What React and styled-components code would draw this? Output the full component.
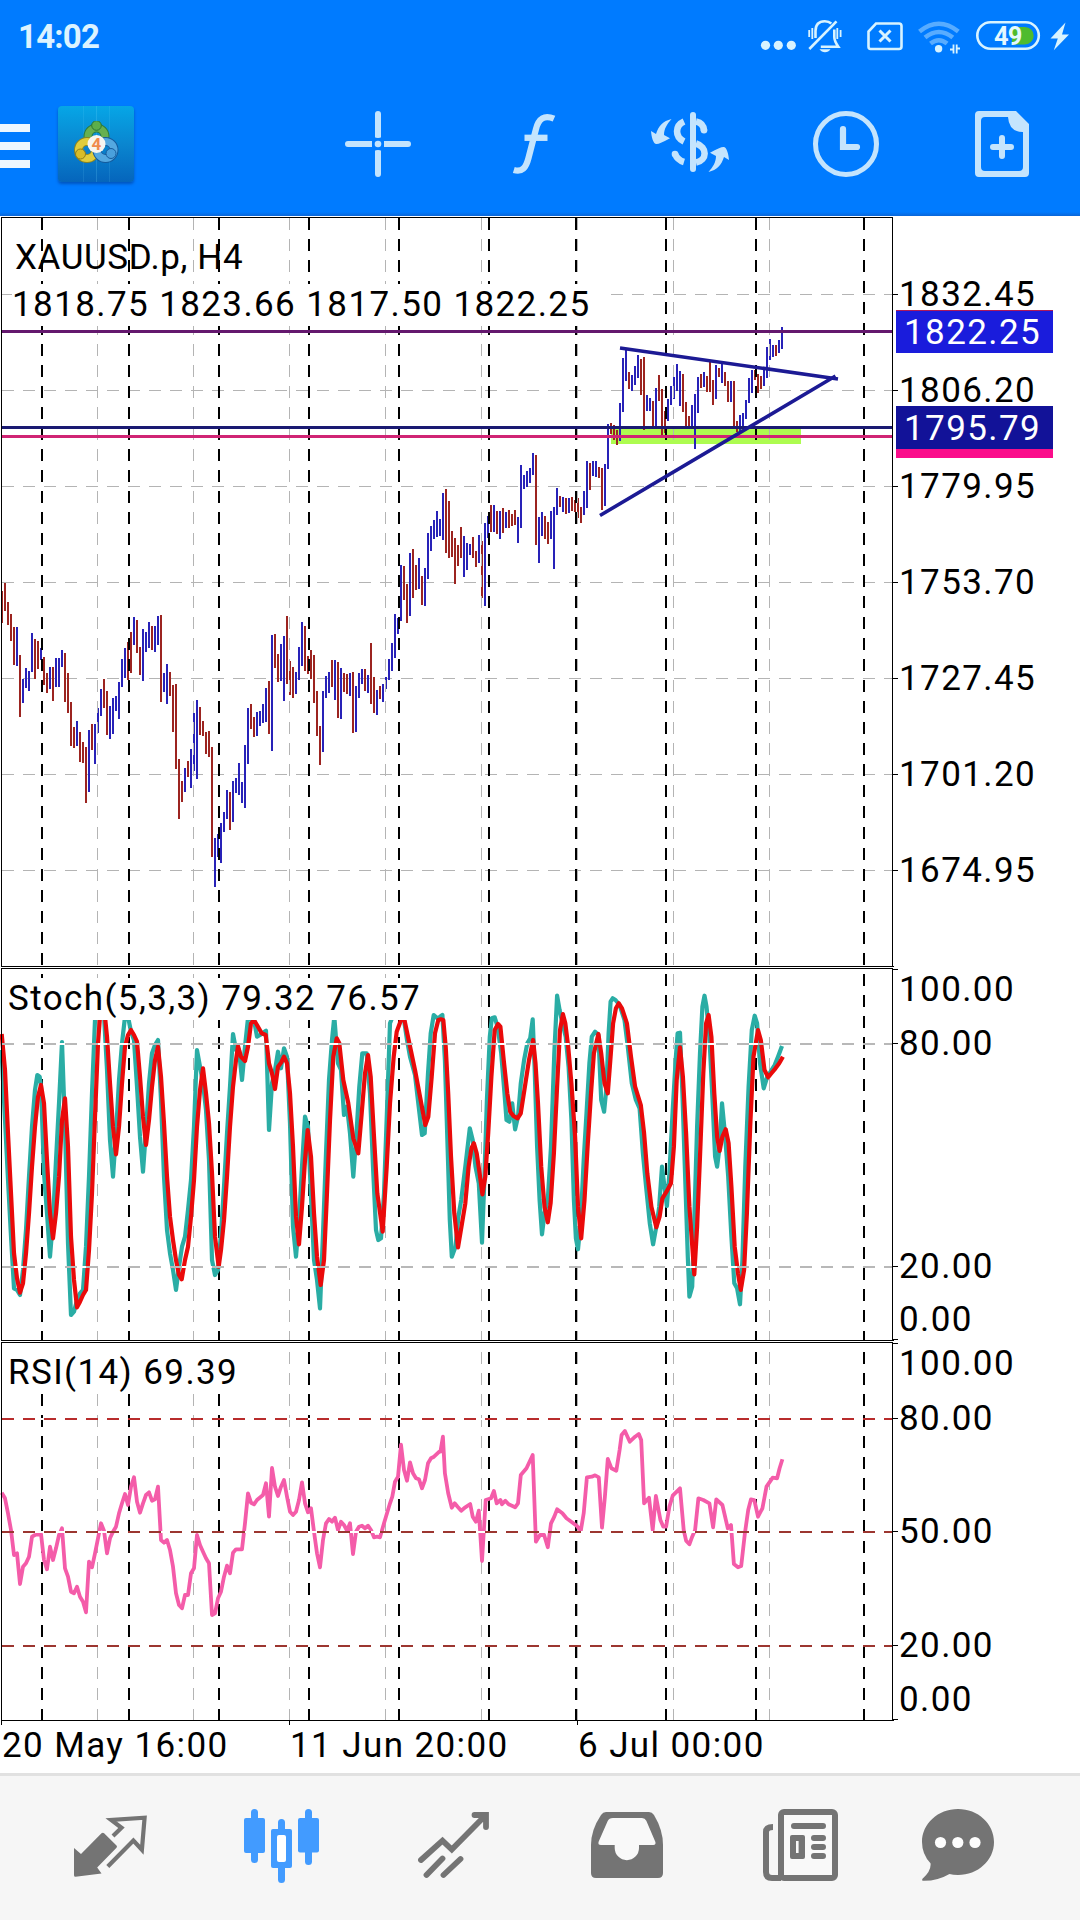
import React from 'react'
import styled, { createGlobalStyle } from 'styled-components'

const MONTH_LINES = [42, 129, 219, 309, 399, 489, 576, 666, 756, 864]
const GRID_LINES = [97, 193, 289, 385, 481, 577, 673, 769]
const PRICE_ROWS = [294, 390, 486, 582, 678, 774, 870]

// high-low bars, three units to a pixel, r = down and b = up
const barGroups = [
  {
    start: 0,
    top: 560,
    bars: `r93,188 r69,152 r126,194 r162,242 r201,314 b201,317 r285,470 b357,429 b324,383 b333,392
b219,335 r237,356 r243,326 b264,300 r291,374 r339,398 b321,386 r321,422 b294,380 b294,380
b270,320 r279,425 r339,458 r426,557 r501,563 b483,557 r516,605 r546,608 r561,728 b510,695
r492,569 b492,611 b444,518 b387,467 r357,443 r393,524 b438,536 b414,521 b408,452 b366,476
b297,380 b264,353 r246,359 r216,338 b171,254 r180,278 r261,344 b207,362 b216,275 b186,263
r198,269 b198,275 b168,254 r165,425 b339,395 b312,433 r336,407 r375,515 r372,626 r597,776
r663,725 b624,695 r603,650 b567,683 b459,632 b420,656 r441,524 r483,527 r516,581 r513,590
r561,890 b834,980 b822,890 b789,908 b756,815 b690,776 r696,809 b663,785 b654,698 b609,704
b666,728 b555,743 b444,611 r432,506 r471,530 b456,527 b453,497 b432,488 b384,485 r363,521
b225,572 r222,323 r282,365 b252,362 b228,422 r168,371 r303,404 r321,413 b336,401 b261,359
b186,317 r198,332 r288,341 r270,356 r285,428 r393,527 r498,614 b393,575 b348,413 b336,398
r300,380 b300,419 r306,473 b324,476 r339,395 r342,401 b339,407 r336,518 b378,515 b339,413
b327,371 r327,392 b345,398 r249,431 r351,458 b390,464 r378,416 b372,425 b351,386 b297,359
b249,332 b162,293 b174,221`,
  },
  {
    start: 133,
    top: 430,
    bars: `b405,572 r408,509 r462,578 b369,557 r357,503 r405,479 b384,476 r438,524 b414,527 b309,446
b288,362 b270,326 b243,320 b267,317 b189,329 r177,368 r213,383 r303,380 r324,461 r345,407
r291,383 b318,440 b339,419 b342,374 r321,383 r363,410 b315,398 r333,503 b279,527 b258,323
r225,305 b225,305 r243,311 b243,326 r234,308 b246,293 r240,293 r252,287 r240,284 b261,338
b105,293 b135,176 b123,170 b114,158 b69,134 r75,344 b261,398 b246,317 r258,326 r276,341
b243,326 b231,416 b174,254 r198,230 b201,245 r204,251 b204,248 r201,242 r210,245 r204,263
r231,278 b183,254 b93,233 r99,179 b93,137 b93,140 r111,143 r114,239 b102,227`,
  },
  {
    start: 202,
    top: 300,
    bars: `b372,506 r369,401 r375,419 r390,434 b309,422 b174,335 b147,242 r216,266 b225,272 b198,254
b165,233 r177,284 r171,389 b285,332 b294,332 r303,380 b264,377 r225,302 r267,404 r333,398
b297,364 b258,314 b231,296 b192,272 b213,317 r222,335 r306,377 r348,377 b315,380 b282,446
b231,338 r222,263 b216,260 r228,275 r186,275 r240,314 b195,296 r204,230 b192,248 r216,257
r243,305 b243,305 r243,377 r363,395 b345,401 b339,383 b300,356 b234,308 b210,278 r210,239
r222,278 r228,266 b210,257 b141,233 b117,179 b135,170 r135,167 b120,158 b81,146`,
  },
]

const bars = barGroups.flatMap((group) =>
  group.bars.split(/\s+/).map((bar, index) => {
    const [high, low] = bar.slice(1).split(',').map(Number)
    return {
      x: 1 + 3 * (group.start + index),
      y: Math.round(group.top + high / 3),
      height: Math.round((low - high) / 3),
      fill: bar[0] === 'r' ? '#9c2420' : '#2822b8',
    }
  })
)

// each line is kept in two halves with their own horizontal scale
const trace = (top, left, right) => {
  const convert = (text, start, scale) =>
    text.trim().split(/\s+/).map((pair) => {
      const [x, y] = pair.split(',').map(Number)
      return `${(start + x / scale).toFixed(1)},${(top + y / 3).toFixed(1)}`
    })
  return [...convert(left, 0, 3), ...convert(right, 440, 2.45)].join(' ')
}

const stochMain = trace(
  960,
  `4,270 6,300 15,480 24,660 33,830 42,985 51,990 60,1005 69,930 78,810 87,650 96,500 105,390 112,345 119,350 123,380
132,640 141,760 150,890 159,780 168,600 177,430 186,246 195,500 204,850 213,1065 222,1055 231,1020 240,1000 249,990
258,860 267,650 276,400 285,180 294,165 312,165 321,330 330,540 339,650 348,520 357,360 366,250 375,170 384,170
393,215 402,240 411,380 420,530 429,635 438,510 447,370 456,280 465,255 474,240 483,420 492,650 501,810 510,880
519,930 528,990 537,920 546,860 555,830 564,750 573,660 582,500 591,270 600,320 609,370 618,450 627,600 636,900
645,945 654,930 663,820 672,680 681,520 690,380 699,222 708,270 717,270 726,360 735,260 744,175 762,180 771,230
780,225 798,212 807,510 816,370 825,330 834,275 843,325 852,265 861,290 870,490 879,800 888,890 897,780 906,620
915,470 924,500 933,710 942,900 951,960 960,1045 969,820 978,580 987,360 996,240 1003,170 1014,310 1023,330
1032,465 1041,440 1050,520 1060,650 1070,510 1078,380 1087,280 1100,280 1110,400 1119,620 1128,810 1135,840
1143,835 1152,700 1161,450 1170,190 1180,165 1203,170 1212,180 1221,240 1230,290 1245,345 1256,440 1266,525
1274,520 1284,340 1292,220 1301,165 1312,175`,
  `0,170 6,165 12,300 20,620 24,780 29,890 38,860 45,770 52,720 62,620 73,505 80,540 87,620 95,670 103,848 108,680
115,420 122,230 127,175 134,172 141,200 150,280 158,400 163,480 170,485 177,430 184,508 191,470 198,370 206,300
214,250 221,235 227,178 232,330 238,560 244,720 250,823 256,760 264,720 272,560 280,280 287,107 293,150 300,190
308,230 315,320 322,480 328,720 333,835 338,868 345,780 352,600 359,460 366,310 372,230 380,215 388,225 395,420
402,455 408,380 413,220 418,125 423,115 430,120 440,135 452,180 460,260 470,370 480,420 489,445 497,580 505,680
514,790 522,853 530,800 537,740 544,620 550,680 556,738 562,640 570,450 578,290 582,220 588,218 594,400 602,700
607,890 611,1010 618,980 624,740 630,500 637,280 643,140 648,107 653,140 660,230 667,400 674,590 679,620 685,560
691,430 698,520 706,650 714,830 721,970 728,985 735,1033 741,900 748,620 756,380 764,210 771,167 777,190 784,310
793,385 802,350 810,335 820,315 828,290 838,258`
)

const stochSignal = trace(
  960,
  `5,222 15,330 24,520 33,700 42,880 51,955 60,998 69,970 78,880 87,760 96,620 105,500 114,410 123,375 132,430
141,600 150,760 159,835 168,760 177,650 186,480 195,415 204,560 213,830 222,960 231,1042 240,1025 249,1005 258,990
267,870 276,700 285,470 294,250 300,170 315,170 321,230 330,370 339,500 348,583 357,500 366,370 375,260 384,225
393,210 402,225 411,245 420,350 429,470 438,555 447,480 456,380 465,300 474,260 483,350 492,490 501,650 510,770
519,840 528,900 537,945 545,958 555,900 564,860 573,770 582,660 591,500 600,390 609,325 618,400 627,490 636,640
645,830 656,920 663,870 672,780 681,650 690,500 699,380 708,300 714,258 723,290 735,303 744,260 753,190 762,180
771,195 785,220 797,225 807,310 816,340 825,387 834,320 843,308 852,290 861,310 870,400 879,560 888,770 897,853
906,740 915,600 923,510 933,590 942,760 951,890 962,975 972,900 980,720 990,480 1000,290 1010,235 1018,250
1030,360 1045,430 1060,535 1075,580 1085,460 1095,340 1104,285 1112,350 1122,530 1132,700 1148,815 1160,620
1170,430 1181,290 1190,215 1203,180 1213,178 1225,235 1245,330 1260,410 1276,495 1285,470 1295,350 1305,220 1315,180`,
  `2,178 8,180 14,260 20,400 27,590 35,760 44,862 54,790 62,730 70,620 77,565 83,550 90,580 97,640 104,703 111,650
118,520 126,350 134,210 142,192 148,200 156,300 165,400 172,455 180,468 190,475 198,460 208,380 218,300 228,240
234,310 240,430 248,620 256,740 264,787 271,730 279,580 287,380 294,210 301,162 307,190 314,260 322,370 331,530
338,740 346,835 354,720 362,550 370,400 377,280 388,222 395,280 403,370 411,400 418,290 424,190 431,145 438,130
446,145 458,190 468,290 478,380 492,435 500,520 508,640 518,740 530,802 538,770 545,715 555,695 566,670 573,560
580,360 588,262 595,350 603,520 611,740 623,943 630,800 637,590 645,340 652,190 658,165 665,230 672,400 679,530
685,573 692,530 700,508 707,550 714,680 722,860 730,940 737,990 745,930 752,760 760,500 768,290 779,210 786,240
795,330 804,352 812,340 822,325 831,310 840,290`
)

const rsiLine = trace(
  1340,
  `5,458 15,475 24,520 33,570 42,645 51,640 60,732 69,680 78,670 87,650 96,590 105,585 123,582 132,660 141,688
150,620 159,660 168,625 177,585 186,565 195,685 204,710 213,755 222,760 231,740 240,770 249,785 258,817 267,665
276,682 285,640 294,595 303,550 312,572 321,640 330,595 339,575 348,560 357,520 366,490 375,462 384,495 393,440
402,412 411,485 420,518 429,490 438,465 447,457 456,482 465,478 474,440 483,600 492,608 501,600 510,630 519,680
528,760 537,795 546,805 555,765 564,765 573,700 582,685 591,585 600,615 609,635 618,655 627,670 636,825 645,820
654,775 663,755 672,710 681,677 690,700 699,638 708,628 726,628 735,550 744,460 753,488 762,493 771,480 789,465
798,430 807,530 816,384 825,440 834,468 843,440 852,420 861,470 870,515 879,525 888,515 897,480 906,427 915,490
924,517 933,505 942,575 951,640 960,682 969,600 978,550 987,537 996,545 1005,533 1014,570 1023,545 1032,555
1041,572 1050,550 1059,642 1068,575 1077,560 1086,557 1095,565 1104,557 1113,570 1122,592 1131,590 1140,592
1152,550 1161,520 1170,490 1177,470 1185,425 1194,410 1203,314 1212,390 1221,422 1230,367 1239,400 1248,415
1257,418 1266,445 1275,420 1284,370 1293,355 1302,350 1318,335`,
  `1,335 7,290 12,400 20,460 29,503 36,490 43,500 52,512 62,502 74,492 80,530 88,545 95,512 103,663 108,560 112,480
125,475 132,453 139,490 148,480 152,493 160,482 168,493 184,502 191,490 198,405 212,385 227,345 235,605 245,585
255,585 264,622 272,550 280,530 287,508 300,520 310,535 335,557 345,572 352,520 360,412 372,410 380,406 389,412
397,563 404,470 411,357 420,385 432,392 440,330 445,285 453,273 465,305 478,290 487,282 493,300 500,490 512,473
521,570 529,468 540,540 547,560 554,560 562,500 570,467 588,445 597,570 603,602 611,613 618,590 625,570 633,475
645,480 660,490 669,562 677,478 692,495 705,565 713,555 720,672 730,682 738,678 747,580 755,510 762,478 770,480
779,530 790,505 800,440 815,413 826,415 832,385 839,358`
)

const priceLabels = [
  { text: '1832.45', y: 294 },
  { text: '1806.20', y: 390 },
  { text: '1779.95', y: 486 },
  { text: '1753.70', y: 582 },
  { text: '1727.45', y: 678 },
  { text: '1701.20', y: 774 },
  { text: '1674.95', y: 870 },
]
const stochLabels = [
  { text: '100.00', y: 989, tick: 969 },
  { text: '80.00', y: 1043, tick: 1043 },
  { text: '20.00', y: 1266, tick: 1266 },
  { text: '0.00', y: 1319, tick: 1339 },
]
const rsiLabels = [
  { text: '100.00', y: 1363, tick: 1343 },
  { text: '80.00', y: 1418, tick: 1418 },
  { text: '50.00', y: 1531, tick: 1531 },
  { text: '20.00', y: 1645, tick: 1645 },
  { text: '0.00', y: 1699, tick: 1719 },
]

function Verticals({ top, bottom }) {
  // every dash starts on the same 21px rhythm, counted from the first pane
  const offset = (top - 218) % 21
  return (
    <g shapeRendering="crispEdges" fill="none" strokeDasharray="12 9" strokeDashoffset={offset}>
      {GRID_LINES.map((x) => (
        <path key={x} d={`M${x + 0.5} ${top}V${bottom}`} stroke="#b4b4b4" />
      ))}
      {MONTH_LINES.map((x) => (
        <path key={x} d={`M${x} ${top}V${bottom}`} stroke="#000" strokeWidth="2" />
      ))}
    </g>
  )
}

function Level({ y, color, width = 2 }) {
  return (
    <g shapeRendering="crispEdges" strokeWidth={width}>
      <path d={`M2 ${y}H892`} stroke="#fff" />
      <path d={`M2 ${y}H892`} stroke={color} strokeDasharray="12 9" />
    </g>
  )
}

function Frame({ top, bottom, ticks }) {
  return (
    <g shapeRendering="crispEdges" fill="none" stroke="#000">
      <path d={`M1 ${top + 0.5}H892.5V${bottom + 0.5}M894 ${bottom + 0.5}H1.5V${top}`} />
      {ticks.map((y) => (
        <path key={y} d={`M893 ${y + 0.5}H898`} />
      ))}
    </g>
  )
}

function Axis({ labels, top, children }) {
  return (
    <Scale>
      {labels.map((label) => (
        <ScaleLabel key={label.text} style={{ top: label.y - top - 17 }}>
          {label.text}
        </ScaleLabel>
      ))}
      {children}
    </Scale>
  )
}

function StatusBar() {
  return (
    <Status>
      <Clock>14:02</Clock>
      <Icon viewBox="760 16 312 40" $w={312} $h={40}>
        <g fill="#d8f3ff">
          <circle cx="765.5" cy="45.3" r="4.6" />
          <circle cx="778.3" cy="45.3" r="4.6" />
          <circle cx="791.3" cy="45.3" r="4.6" />
          <path d="M819.5 49.2h11q-2 3-5.5 3t-5.5-3z" />
          <circle cx="938.6" cy="48.8" r="3.7" />
          <path d="M1065.5 22.5L1050.5 38.5h7.3l-4 11.8L1069 34.5h-7z" />
        </g>
        <g fill="none" stroke="#d8f3ff" strokeWidth="2.6">
          <path d="M815.5 38V31q0-9.5 9.3-9.7 4 0 6.5 2.2M834.3 29.5V37q0 4 4 9.7h-17.5" />
          <path d="M809.3 49L836.5 21.3" />
          <path d="M809.2 30v7M812.3 28v11M837.3 28v11M840.6 30v7" strokeWidth="1.8" />
          <path d="M876 23.5h23q2.5 0 2.5 2.5v20.5q0 2.5-2.5 2.5h-28.5q-2 0-2-2.5V31.5z" />
          <path d="M879.5 30.5l11 11M890.5 30.5l-11 11" strokeWidth="3" />
          <path d="M950 49.5h3.5V44.5M953.5 44.5V53.5M956.7 53.5V44.5M956.7 48.5h3.3" strokeWidth="1.8" />
        </g>
        <g fill="none" stroke="#58acff" strokeWidth="4.6">
          <path d="M919.5 31.5q19.3-15.5 38.8 0" />
          <path d="M925 37.5q13.8-11 27.8 0" />
          <path d="M930.5 43.5q8.3-6.5 16.6 0" />
        </g>
        <path d="M1012 27h13a8.7 8.7 0 0 1 0 17.4h-13z" fill="#4fbb2e" />
        <rect x="977.3" y="22.3" width="61.5" height="26.5" rx="13.2" fill="none" stroke="#d8f3ff" strokeWidth="2.6" />
        <BatteryText x="994" y="44.8">49</BatteryText>
      </Icon>
    </Status>
  )
}

function Toolbar() {
  return (
    <Tools>
      <MenuButton>
        <i />
        <i />
        <i />
      </MenuButton>
      <AppTile>
        <svg width="46" height="46" viewBox="73 121 46 46">
          <g fill="none" strokeWidth="7">
            <circle cx="96.5" cy="136.5" r="8.5" stroke="#2c7a3c" strokeWidth="9" />
            <circle cx="96.5" cy="136.5" r="8.5" stroke="#67b050" />
            <circle cx="87" cy="150" r="8.5" stroke="#8c8420" strokeWidth="9" />
            <circle cx="87" cy="150" r="8.5" stroke="#e0cc3c" />
            <circle cx="105.5" cy="150" r="8.5" stroke="#145a9c" strokeWidth="9" />
            <circle cx="105.5" cy="150" r="8.5" stroke="#54a8e0" />
          </g>
          <circle cx="96.5" cy="125.5" r="4.8" fill="#5cae4a" stroke="#2a7434" />
          <circle cx="80.5" cy="154" r="5" fill="#d8bc28" stroke="#8c7c1c" />
          <circle cx="111" cy="153.5" r="5" fill="#4aa0dc" stroke="#175c9c" />
          <circle cx="96.5" cy="144" r="9" fill="#f7f5f0" />
          <TileText x="96.5" y="150">4</TileText>
        </svg>
      </AppTile>
      <Icon viewBox="344 110 68 68" $w={68} $h={68} $gap={209}>
        <g stroke="#c4e4fd" strokeWidth="6" strokeLinecap="round">
          <path d="M348 144h21M387 144h21M378 114v21M378 153v21" />
          <path d="M369 144h3M384 144h3M378 134v3.5M378 150.5v3" strokeLinecap="butt" />
        </g>
        <circle cx="378" cy="144" r="3.3" fill="#c4e4fd" />
      </Icon>
      <Icon viewBox="511 110 46 68" $w={46} $h={68} $gap={99}>
        <g fill="none" stroke="#c4e4fd" strokeWidth="6.3">
          <path d="M513.8 170C522 172.5 526 168 528.5 158L536 129C538.5 118.5 544.5 114.5 554 118.7" />
          <path d="M524.5 137.8h23" />
        </g>
      </Icon>
      <Icon viewBox="650 110 80 68" $w={80} $h={68} $gap={93}>
        <g fill="none" stroke="#c4e4fd" strokeWidth="6.6">
          <path d="M693 115v54" strokeLinecap="round" strokeWidth="6" />
          <path d="M684 121.5C675 125.5 674.5 137 684 141.5M684 162Q677.5 160 675 154" />
          <path d="M696 121.5Q703.5 123 704 130.5M696 143.5C707.5 147 707.5 160 696 162.5" />
        </g>
        <circle cx="675" cy="154" r="3.3" fill="#c4e4fd" />
        <circle cx="704" cy="130.3" r="3.3" fill="#c4e4fd" />
        <g fill="#c4e4fd">
          <path id="swap-arrow" d="M671.5 119C663 121 658.5 126 656 134L651 131C651.5 137 653 143 656 144Q659 144.5 670 138.3L664 135C664 129 667 124 671.5 119Z" />
          <use href="#swap-arrow" transform="rotate(180 690 145.5)" />
        </g>
      </Icon>
      <Icon viewBox="812 110 68 68" $w={68} $h={68} $gap={82}>
        <g fill="none" stroke="#c4e4fd">
          <circle cx="846" cy="144" r="30.5" strokeWidth="5" />
          <path d="M843 129v18h14" strokeWidth="6.2" strokeLinecap="round" />
        </g>
      </Icon>
      <Icon viewBox="974 110 56 68" $w={56} $h={68} $gap={94}>
        <path
          fillRule="evenodd"
          fill="#c4e4fd"
          d="M979 111h37l13 13v49q0 4-4 4h-46q-4 0-4-4v-58q0-4 4-4zM985 117q-4 0-4 4v46q0 4 4 4h34q4 0 4-4v-35q-14 0-15-15z"
        />
        <path d="M993 147h18M1002 138v18" stroke="#c4e4fd" strokeWidth="6" strokeLinecap="round" />
      </Icon>
    </Tools>
  )
}

function PricePane() {
  return (
    <Pane $h={751}>
      <Plot viewBox="0 216 899 751" $h={751}>
        {PRICE_ROWS.map((y) => (
          <path key={y} d={`M2 ${y + 0.5}H892`} stroke="#b4b4b4" strokeDasharray="12 9" shapeRendering="crispEdges" />
        ))}
        <rect x="611" y="429" width="190" height="15" fill="#adfc50" />
        <g shapeRendering="crispEdges">
          {bars.map((bar) => (
            <rect key={bar.x} width="2" {...bar} />
          ))}
        </g>
        <Verticals top={218} bottom={966} />
        <g shapeRendering="crispEdges">
          <path d="M2 331.5H893" stroke="#64186e" strokeWidth="3" />
          <path d="M2 427.5H893" stroke="#1a1a72" strokeWidth="3" />
          <path d="M2 436.5H893" stroke="#d02474" strokeWidth="3" />
        </g>
        <path d="M620 348L838 379M600 515.5L835.5 376" stroke="#1c1a94" strokeWidth="3.6" />
        <Frame top={217} bottom={966} ticks={PRICE_ROWS} />
      </Plot>
      <Symbol>XAUUSD.p, H4</Symbol>
      <Quotes>1818.75 1823.66 1817.50 1822.25</Quotes>
      <Axis labels={priceLabels} top={216}>
        <PriceTag $top={94} $color="#1a1cdc" $edge="#b01858">1822.25</PriceTag>
        <PriceTag $top={190} $color="#121298" $under>1795.79</PriceTag>
      </Axis>
    </Pane>
  )
}

function StochPane() {
  return (
    <Pane $h={374}>
      <Plot viewBox="0 967 899 374" $h={374}>
        <Verticals top={969} bottom={1341} />
        <g fill="none" strokeWidth="4.2" strokeLinejoin="round">
          <polyline points={stochMain} stroke="#2aada5" />
          <polyline points={stochSignal} stroke="#ea0a0a" />
        </g>
        <Level y={1044} color="#b8b8b8" />
        <Level y={1267} color="#b8b8b8" />
        <Frame top={968} bottom={1340} ticks={stochLabels.map((label) => label.tick)} />
      </Plot>
      <PaneTitle $top={11} $w={424}>Stoch(5,3,3) 79.32 76.57</PaneTitle>
      <Axis labels={stochLabels} top={967} />
    </Pane>
  )
}

function RsiPane() {
  return (
    <Pane $h={384}>
      <Plot viewBox="0 1341 899 384" $h={384}>
        <Verticals top={1343} bottom={1720} />
        <polyline points={rsiLine} fill="none" stroke="#f45ca9" strokeWidth="3.8" strokeLinejoin="round" />
        <Level y={1419} color="#b82c2c" />
        <Level y={1532} color="#9c3630" />
        <Level y={1646} color="#9c3630" />
        <Frame top={1342} bottom={1720} ticks={rsiLabels.map((label) => label.tick)} />
        <path d="M1.5 1721v4M289.5 1721v4M577.5 1721v4" stroke="#000" shapeRendering="crispEdges" />
      </Plot>
      <PaneTitle $top={11} $w={242}>RSI(14) 69.39</PaneTitle>
      <Axis labels={rsiLabels} top={1341} />
    </Pane>
  )
}

function BottomNav() {
  return (
    <Nav>
      <Icon viewBox="74 1808 76 76" $w={76} $h={76} $gap={74}>
        <path d="M74 1848l7 6 20.5-20.8q1.300-1 2.600 0l12.4 12.3q1 1 0 2.200l-19.3 19.8 4.300 6-26 3.200q-1.500 0-1.500-1.500z" fill="#747474" />
        <path d="M113 1836l8.500-8.200-10.3-7.800 33.4-2.300-2.700 32-8.500-9.200-25.6 26" fill="none" stroke="#747474" strokeWidth="4.2" />
      </Icon>
      <Icon viewBox="244 1808 76 76" $w={76} $h={76} $gap={94}>
        <g stroke="#429bff" strokeWidth="7" strokeLinecap="round">
          <path d="M254.5 1812.5v47M281.5 1822.5v8M281.5 1868v11.5M308.5 1812.5v49" />
        </g>
        <rect x="244" y="1818" width="21" height="35" rx="2" fill="#429bff" />
        <rect x="298" y="1818" width="21" height="34.5" rx="2" fill="#429bff" />
        <rect x="271" y="1829" width="21" height="39" rx="2" fill="#429bff" />
        <rect x="277" y="1835" width="9" height="27" rx="2" fill="#fff" />
      </Icon>
      <Icon viewBox="417 1808 76 76" $w={76} $h={76} $gap={97}>
        <g fill="none" stroke="#747474" strokeWidth="5.8" strokeLinecap="round">
          <path d="M421 1860l21.5-19.3 9.3 8.8 34-34.5M474.5 1815H486v12" />
          <path d="M426.5 1875l16-16.5M443.5 1875l17-16" />
        </g>
      </Icon>
      <Icon viewBox="591 1808 76 76" $w={76} $h={76} $gap={98}>
        <path
          d="M606 1812h43q3 0 5 3 9 15 9 30v28q0 5-5 5h-62q-5 0-5-5v-28q0-15 10-30 2-3 5-3z"
          fill="#747474"
        />
        <path d="M613 1818h29q3 0 4.3 2.7l9 21q1 3-2 3.300H639v3a12 12 0 0 1-24.3 0v-3H601q-3.500 0-2.300-3.500l9-20.5q1.300-3 5.300-3z" fill="#f9f9f9" />
      </Icon>
      <Icon viewBox="762 1808 76 76" $w={76} $h={76} $gap={95}>
        <rect x="781" y="1812" width="54" height="66" rx="3" fill="#f9f9f9" stroke="#747474" strokeWidth="6" />
        <path d="M773 1827q-7 0-7 5v40q0 6 6 6h9" fill="none" stroke="#747474" strokeWidth="6" />
        <rect x="790" y="1835" width="15" height="24" rx="2" fill="#747474" />
        <rect x="796" y="1841" width="2.6" height="12" fill="#f9f9f9" />
        <path d="M794 1826h29M814 1838h9M814 1847h9M814 1856h9" stroke="#747474" strokeWidth="6" strokeLinecap="round" />
      </Icon>
      <Icon viewBox="922 1808 76 76" $w={76} $h={76} $gap={84}>
        <path d="M958 1809c20 0 36 14.7 36 33s-16 33-36 33q-5 0-8.500-1-12 7-26 6.800-2 0-1-2 9-8 8-15.5-8.500-9-8.500-21.300c0-18.3 16-33 36-33z" fill="#747474" />
        <g fill="#fdfdfd">
          <circle cx="940.5" cy="1842.5" r="5.6" />
          <circle cx="957.8" cy="1842.5" r="5.6" />
          <circle cx="975" cy="1842.5" r="5.6" />
        </g>
      </Icon>
    </Nav>
  )
}

function App() {
  return (
    <Screen>
      <GlobalStyle />
      <Header>
        <StatusBar />
        <Toolbar />
      </Header>
      <PricePane />
      <StochPane />
      <RsiPane />
      <Dates>
        <DateLabel $w={288}>20 May 16:00</DateLabel>
        <DateLabel $w={288}>11 Jun 20:00</DateLabel>
        <DateLabel $w={300}>6 Jul 00:00</DateLabel>
      </Dates>
      <BottomNav />
    </Screen>
  )
}

const GlobalStyle = createGlobalStyle`
body{
    margin:0;
    background:#fff;
    font-family: Roboto, sans-serif;
}
`
const Screen = styled.div`
width:1080px;
height:1920px;
display:flex;
flex-direction:column;
overflow:hidden;
background:#fff;
color:#000;
`
const Header = styled.header`
height:216px;
flex:none;
background:linear-gradient(#007bff 212px, #0a66d8 216px);
`
const Status = styled.div`
height:72px;
display:flex;
justify-content:space-between;
align-items:center;
padding:0 8px 0 18px;
`
const Clock = styled.span`
font-size:33px;
font-weight:700;
letter-spacing:-0.8px;
color:#dcf3ff;
margin-top:1px;
`
const BatteryText = styled.text`
font-size:25.5px;
font-weight:700;
letter-spacing:-1px;
fill:#e4f8ff;
`
const Icon = styled.svg`
display:block;
flex:none;
width:${(props) => props.$w}px;
height:${(props) => props.$h}px;
margin-left:${(props) => props.$gap || 0}px;
`
const Tools = styled.div`
height:144px;
display:flex;
align-items:center;
`
const MenuButton = styled.div`
display:flex;
flex-direction:column;
gap:10px;
width:30px;
margin-top:4px;
i{
    height:8px;
    background:#eef7ff;
}
`
const AppTile = styled.div`
width:76px;
height:76px;
margin-left:28px;
margin-right:1px;
display:flex;
align-items:center;
justify-content:center;
border-radius:4px;
background:
  linear-gradient(90deg, transparent 25px, rgba(120,220,255,.12) 25px 26px, transparent 26px 38px, rgba(120,220,255,.2) 38px 39px, transparent 39px 51px, rgba(120,220,255,.12) 51px 52px, transparent 52px),
  linear-gradient(#06a6e6, #0a86d0 50%, #0565bc);
box-shadow:0 2px 3px rgba(0,40,110,.45);
`
const TileText = styled.text`
font-size:17px;
font-weight:700;
text-anchor:middle;
fill:#f08a4c;
`
const Pane = styled.section`
position:relative;
flex:none;
display:flex;
height:${(props) => props.$h}px;
`
const Plot = styled.svg`
display:block;
flex:none;
width:899px;
height:${(props) => props.$h}px;
`
const Scale = styled.div`
position:relative;
flex:1;
`
const chartText = `
font-size:35px;
line-height:36px;
letter-spacing:1.4px;
white-space:pre;
`
const ScaleLabel = styled.span`
${chartText}
position:absolute;
left:0;
`
const PriceTag = styled.div`
${chartText}
position:absolute;
top:${(props) => props.$top}px;
left:-3px;
width:157px;
height:43px;
line-height:43px;
box-sizing:border-box;
padding-left:8px;
color:#fff;
background:${(props) => props.$color};
border-top:${(props) => (props.$edge ? `1px solid ${props.$edge}` : '1px solid transparent')};
box-shadow:${(props) => (props.$under ? '0 9px 0 #fb0d8b' : 'none')};
`
const Symbol = styled.div`
${chartText}
letter-spacing:0.6px;
position:absolute;
top:24px;
left:15px;
`
const Quotes = styled.div`
${chartText}
position:absolute;
top:68px;
left:12px;
height:42px;
line-height:41px;
width:592px;
background:#fff;
`
const PaneTitle = styled.div`
${chartText}
position:absolute;
top:${(props) => props.$top}px;
left:2px;
width:${(props) => props.$w - 6}px;
height:42px;
line-height:41px;
padding-left:6px;
background:#fff;
`
const Dates = styled.div`
display:flex;
flex:none;
height:48px;
padding-left:2px;
`
const DateLabel = styled.span`
${chartText}
padding-top:3px;
width:${(props) => props.$w}px;
`
const Nav = styled.nav`
box-sizing:border-box;
height:147px;
border-top:3px solid #e1e1e1;
background:#f6f6f6;
display:flex;
align-items:flex-start;
padding-top:32px;
`

export default App
